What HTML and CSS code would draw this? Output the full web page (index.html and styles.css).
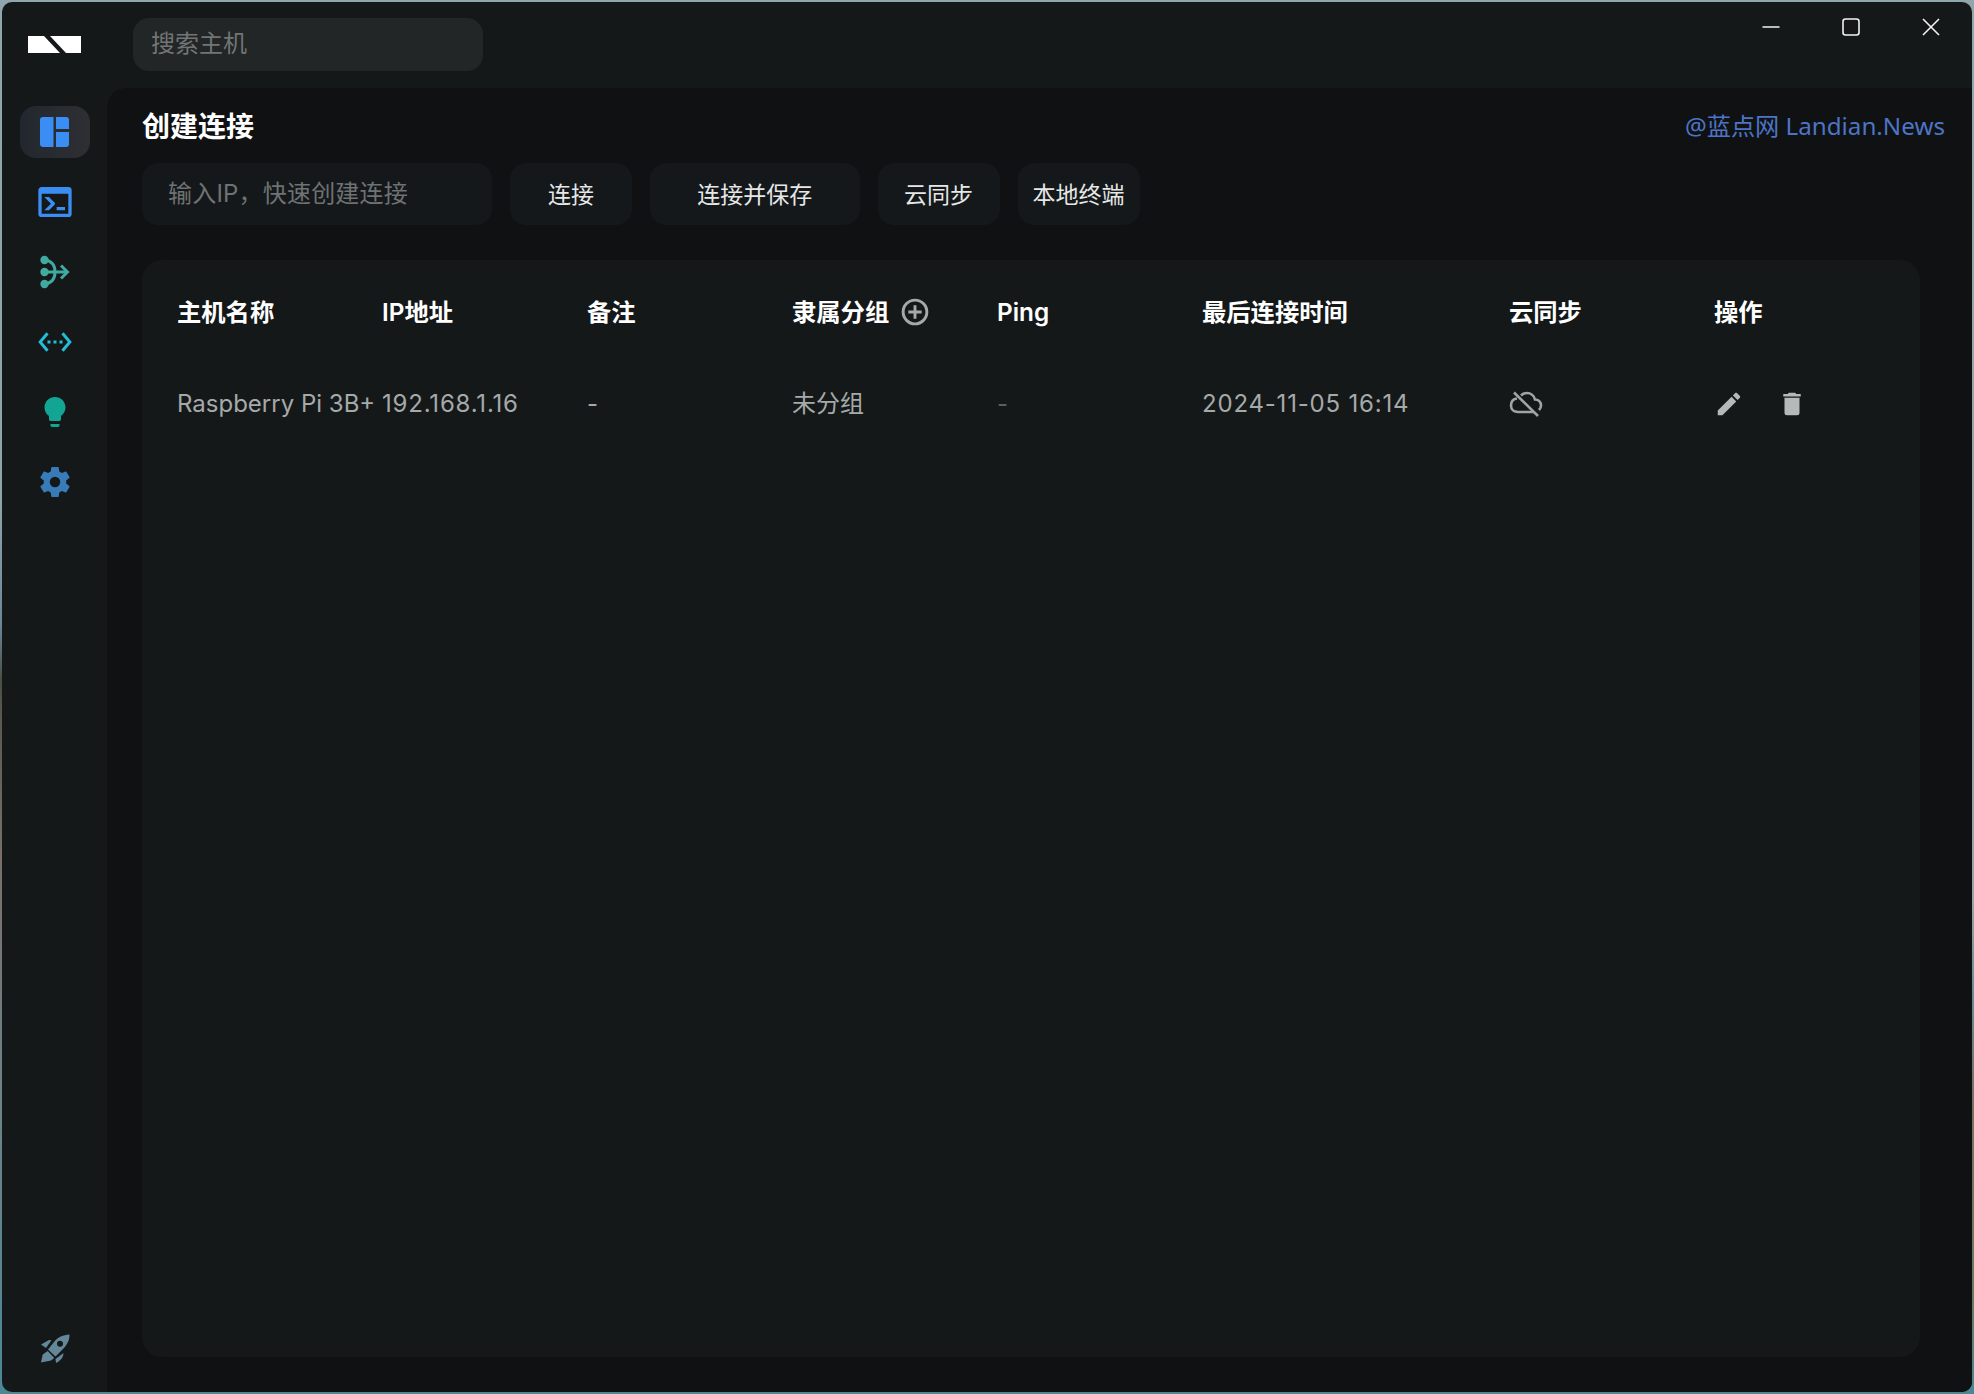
FILE: index.html
```html
<!DOCTYPE html>
<html lang="zh-CN">
<head>
    <meta charset="UTF-8">
    <title>创建连接</title>
    <link rel="stylesheet" href="styles.css">
</head>
<body>
    <div class="window">
        <!-- 顶部栏 -->
        <header class="topbar">
            <div class="logo-box">
                <svg class="logo" viewBox="0 0 53 17"><polygon points="0,0 16,0 32,17 0,17"/><polygon points="22,0 53,0 53,17 38,17"/></svg>
            </div>
            <div class="search">搜索主机</div>
            <div class="win-controls">
                <button class="win-btn"><svg viewBox="0 0 18 18"><path d="M0.5 9H17.5"/></svg></button>
                <button class="win-btn"><svg viewBox="0 0 18 18"><rect x="1" y="1" width="16" height="16" rx="2.5"/></svg></button>
                <button class="win-btn"><svg viewBox="0 0 18 18"><path d="M1 1L17 17M17 1L1 17"/></svg></button>
            </div>
        </header>

        <div class="body">
            <!-- 侧边导航 -->
            <nav class="sidebar">
                <a class="nav-item active">
                    <svg class="icon-blue" width="30" height="30" viewBox="0 0 30 30"><path d="M3 0H13.500V30H3A3 3 0 0 1 0 27V3A3 3 0 0 1 3 0Z"/><path d="M16 0H26A3 3 0 0 1 29 3V12H16Z"/><path d="M16 15H29V27A3 3 0 0 1 26 30H16Z"/></svg>
                </a>
                <a class="nav-item">
                    <svg class="icon-blue" width="40" height="40" viewBox="0 0 24 24"><path d="M20,19V7H4V19H20M20,3A2,2 0 0,1 22,5V19A2,2 0 0,1 20,21H4A2,2 0 0,1 2,19V5C2,3.89 2.9,3 4,3H20M13,17V15H18V17H13M9.58,13L5.57,9H8.4L11.7,12.3C12.09,12.69 12.09,13.33 11.7,13.72L8.42,17H5.59L9.58,13Z"/></svg>
                </a>
                <a class="nav-item">
                    <svg class="icon-teal" width="30" height="34" viewBox="0 0 30 34"><circle cx="4.500" cy="5" r="4.200"/><circle cx="4.500" cy="17" r="4.200"/><circle cx="4.500" cy="29" r="4.200"/><path class="line" d="M5 17H27M21 10.500L27.500 17L21 23.500M5 5C12 6 15 11 15 17C15 23 12 28 5 29"/></svg>
                </a>
                <a class="nav-item">
                    <svg class="icon-cyan" width="36" height="36" viewBox="0 0 24 24"><path d="M7.77 6.76L6.23 5.48.82 12l5.41 6.52 1.54-1.28L3.42 12l4.35-5.24zM7 13h2v-2H7v2zm10-2h-2v2h2v-2zm-6 2h2v-2h-2v2zm6.770-7.520l-1.540 1.280L20.580 12l-4.350 5.240 1.540 1.280L23.180 12l-5.410-6.520z"/></svg>
                </a>
                <a class="nav-item">
                    <svg class="icon-green" width="36" height="36" viewBox="0 0 24 24"><path d="M9 21c0 .5.4 1 1 1h4c.6 0 1-.5 1-1v-1H9v1zm3-19C8.100 2 5 5.100 5 9c0 2.400 1.200 4.500 3 5.700V17c0 .5.4 1 1 1h6c.6 0 1-.5 1-1v-2.300c1.800-1.300 3-3.400 3-5.700 0-3.900-3.100-7-7-7z"/></svg>
                </a>
                <a class="nav-item">
                    <svg class="icon-steel" width="36" height="36" viewBox="0 0 24 24"><path d="M12,15.5A3.5,3.5 0 0,1 8.5,12A3.5,3.5 0 0,1 12,8.5A3.5,3.5 0 0,1 15.5,12A3.5,3.5 0 0,1 12,15.5M19.43,12.97C19.47,12.65 19.5,12.33 19.5,12C19.5,11.67 19.47,11.34 19.43,11L21.54,9.37C21.73,9.22 21.78,8.95 21.66,8.73L19.66,5.27C19.54,5.05 19.27,4.96 19.05,5.05L16.56,6.05C16.04,5.66 15.5,5.32 14.87,5.07L14.5,2.42C14.46,2.18 14.25,2 14,2H10C9.75,2 9.54,2.18 9.5,2.42L9.13,5.07C8.5,5.32 7.96,5.66 7.44,6.05L4.95,5.05C4.73,4.96 4.46,5.05 4.34,5.27L2.34,8.73C2.21,8.95 2.27,9.22 2.46,9.37L4.57,11C4.53,11.34 4.5,11.67 4.5,12C4.5,12.33 4.53,12.65 4.57,12.97L2.46,14.63C2.27,14.78 2.21,15.05 2.34,15.27L4.34,18.73C4.46,18.95 4.73,19.03 4.95,18.95L7.44,17.94C7.96,18.34 8.5,18.68 9.13,18.93L9.5,21.58C9.54,21.82 9.75,22 10,22H14C14.25,22 14.46,21.82 14.5,21.58L14.87,18.93C15.5,18.67 16.04,18.34 16.56,17.94L19.05,18.95C19.27,19.03 19.54,18.95 19.66,18.73L21.66,15.27C21.78,15.05 21.73,14.78 21.54,14.63L19.43,12.97Z"/></svg>
                </a>
                <a class="nav-item rocket">
                    <svg class="icon-slate" width="29" height="29" viewBox="0 0 29 29"><path fill-rule="evenodd" d="M28.500 .5C22 1 17 3 13 8L7 15.500L14.500 22.500L21 16C26 11 28.500 7 28.500 .5ZM19 6.700A3 3 0 1 1 19 12.700A3 3 0 1 1 19 6.700Z"/><path d="M0 10.500L8 6L10.500 6.300L5 14Z"/><path d="M14.500 25L22.500 19L22 22C21 25 18 27.500 15 29Z"/><path d="M0 28.500L1.700 20.500L6.700 17L13.300 24L10 26.500Z"/></svg>
                </a>
            </nav>

            <!-- 主内容 -->
            <main class="main">
                <div class="title-row">
                    <h1 class="title">创建连接</h1>
                    <span class="watermark">@蓝点网 Landian.News</span>
                </div>

                <div class="toolbar">
                    <div class="ip-input">输入IP，快速创建连接</div>
                    <button class="btn">连接</button>
                    <button class="btn btn-wide">连接并保存</button>
                    <button class="btn">云同步</button>
                    <button class="btn">本地终端</button>
                </div>

                <section class="card">
                    <div class="row row-head">
                        <span class="cjk">主机名称</span>
                        <span class="cjk">IP地址</span>
                        <span class="cjk">备注</span>
                        <span class="cjk group-head">隶属分组
                            <svg class="icon-grey" width="32" height="32" viewBox="0 0 24 24"><path d="M12,19.800C7.700,19.800 4.200,16.300 4.200,12C4.200,7.700 7.700,4.200 12,4.200C16.300,4.200 19.800,7.700 19.800,12C19.800,16.300 16.300,19.800 12,19.800M12,2A10,10 0 0,0 2,12A10,10 0 0,0 12,22A10,10 0 0,0 22,12A10,10 0 0,0 12,2M13.100,7H10.900V10.900H7V13.100H10.900V17H13.100V13.100H17V10.900H13.100V7Z"/></svg>
                        </span>
                        <span>Ping</span>
                        <span class="cjk">最后连接时间</span>
                        <span class="cjk">云同步</span>
                        <span class="cjk">操作</span>
                    </div>
                    <div class="row row-data">
                        <span>Raspberry Pi 3B+</span>
                        <span class="num">192.168.1.16</span>
                        <span>-</span>
                        <span class="cjk">未分组</span>
                        <span class="muted">-</span>
                        <span class="num">2024-11-05 16:14</span>
                        <span class="cell-icon">
                            <svg class="cloud" width="34" height="26" viewBox="0 0 34 26"><path d="M8 7.500C4 8 2 11 2 14.500C2 18.500 5 21 9 21H25M30 19C31.500 17.500 32 16 32 14.500C32 11 29.500 8.500 26 8.500C25 4.500 21.500 2 18 2C15.500 2 13.500 3 12 4.500"/><path d="M5 1.500L29 25"/></svg>
                        </span>
                        <span class="actions">
                            <svg class="icon-light" width="30" height="30" viewBox="0 0 24 24"><path d="M20.71,7.04C21.1,6.65 21.1,6 20.71,5.63L18.37,3.29C18,2.9 17.35,2.9 16.96,3.29L15.12,5.12L18.87,8.87M3,17.25V21H6.75L17.81,9.93L14.06,6.18L3,17.25Z"/></svg>
                            <svg class="icon-light" width="30" height="30" viewBox="0 0 24 24"><path d="M19,4H15.5L14.5,3H9.5L8.5,4H5V6H19M6,19A2,2 0 0,0 8,21H16A2,2 0 0,0 18,19V7H6V19Z"/></svg>
                        </span>
                    </div>
                </section>
            </main>
        </div>
    </div>
</body>
</html>
```

FILE: styles.css
```css
* {
    box-sizing: border-box;
}

html, body {
    margin: 0;
    height: 100%;
}

/* 窗口外露出的一圈壁纸 */
body {
    padding: 2px;
    background-color: #8fa6ad;
    background-image:
        linear-gradient(180deg, #8fa6ad 0, #90a5ab 500px, #6b8699 625px, #4a5040 680px, #5a5a4e 720px, #7a6f6a 860px, #6d8288 1100px, #4a8895 1394px),
        linear-gradient(180deg, #8fa6ad 0, #9aa3a6 900px, #6a8a90 1000px, #7a6f64 1100px, #6a7a60 1300px, #4a8895 1394px);
    background-size: 50% 100%;
    background-position: left top, right top;
    background-repeat: no-repeat;
    font-family: Inter, "Noto Sans CJK SC", sans-serif;
    font-size: 24px;
    color: #a6a9a9;
    overflow: hidden;
}

.window {
    display: flex;
    flex-direction: column;
    height: 100%;
    background: #141819;
    border-radius: 10px;
    overflow: hidden;
}

/* 顶部栏 */
.topbar {
    display: flex;
    height: 86px;
    flex-shrink: 0;
}

.logo-box {
    width: 131px;
    padding: 34px 0 0 26px;
}

.logo {
    display: block;
    width: 53px;
    height: 17px;
    fill: #fff;
}

.search {
    width: 350px;
    height: 53px;
    margin-top: 16px;
    padding: 0 18px;
    border-radius: 16px;
    background: #222627;
    color: #727575;
    line-height: 51px;
}

.win-controls {
    display: flex;
    margin-left: auto;
    padding-right: 1px;
}

.win-btn {
    width: 80px;
    height: 50px;
    padding: 0;
    border: none;
    background: none;
    display: flex;
    align-items: center;
    justify-content: center;
}

.win-btn svg {
    width: 18px;
    height: 18px;
    fill: none;
    stroke: #f2f3f3;
    stroke-width: 1.6;
}

.body {
    display: flex;
    flex: 1;
    min-height: 0;
}

/* 侧边导航 */
.sidebar {
    display: flex;
    flex-direction: column;
    align-items: center;
    width: 105px;
    padding: 18px 17px 18px 18px;
    flex-shrink: 0;
}

.nav-item {
    display: flex;
    align-items: center;
    justify-content: center;
    width: 70px;
    height: 52px;
    margin-bottom: 18px;
    border-radius: 16px;
}

.nav-item.active {
    background: linear-gradient(90deg, #22272f, #2e2f33);
}

.rocket {
    margin-top: auto;
    margin-bottom: 0;
}

.icon-blue { fill: #3a8df2; }
.icon-teal { fill: #40aaa0; }
.icon-teal .line { fill: none; stroke: #40aaa0; stroke-width: 3; }
.icon-cyan { fill: #25bcd6; }
.icon-green { fill: #12a594; }
.icon-steel { fill: #377cb9; }
.icon-slate { fill: #65879a; }
.icon-grey { fill: #a6a9a9; }
.icon-light { fill: #b6b9b9; }

/* 主内容 */
.main {
    display: flex;
    flex-direction: column;
    flex: 1;
    min-width: 0;
    padding: 19px 52px 35px 35px;
    background: #0f1112;
    border-top-left-radius: 20px;
}

.title-row {
    display: flex;
    align-items: center;
    justify-content: space-between;
    height: 38px;
    margin-bottom: 18px;
}

.title {
    margin: 0;
    padding-bottom: 2px;
    font-size: 28px;
    font-weight: 700;
    color: #fff;
}

.watermark {
    margin-right: -25px;
    padding-bottom: 4px;
    color: #4e74c6;
    font-family: "Noto Sans", "Noto Sans CJK SC", sans-serif;
    font-size: 24.2px;
}

.toolbar {
    display: flex;
    gap: 18px;
    margin-bottom: 35px;
}

.ip-input {
    width: 350px;
    height: 62px;
    padding: 0 26px;
    border-radius: 16px;
    background: #14181a;
    color: #6f7272;
    letter-spacing: .2px;
    line-height: 62px;
}

.btn {
    width: 122px;
    height: 62px;
    padding: 0 0 2px;
    border: none;
    border-radius: 16px;
    background: #14181a;
    color: #e6e7e7;
    font-family: inherit;
    font-size: 23px;
}

.btn-wide {
    width: 209.5px;
}

.card {
    flex: 1;
    padding: 20px 0 0 35px;
    background: #141819;
    border-radius: 20px;
}

.row {
    display: grid;
    grid-template-columns: 205px 205px 205px 205px 205px 307px 205px 1fr;
    align-items: center;
}

.row-head {
    height: 64px;
    color: #fff;
    font-size: 24.3px;
    font-weight: 600;
}

.row-data {
    height: 118px;
}

/* 中文字形比西文略低，往上提一点 */
.cjk {
    padding-bottom: 3px;
}

.num {
    letter-spacing: .8px;
}

.group-head {
    display: flex;
    align-items: center;
    gap: 10px;
}

.group-head svg {
    margin-top: 3px;
}

.muted {
    color: #5c5f60;
}

.cell-icon {
    display: flex;
    margin-top: 2px;
}

.cloud {
    fill: none;
    stroke: #a0a4a4;
    stroke-width: 2.6;
}

.actions {
    display: flex;
    gap: 33px;
    margin-top: 2px;
}
```
